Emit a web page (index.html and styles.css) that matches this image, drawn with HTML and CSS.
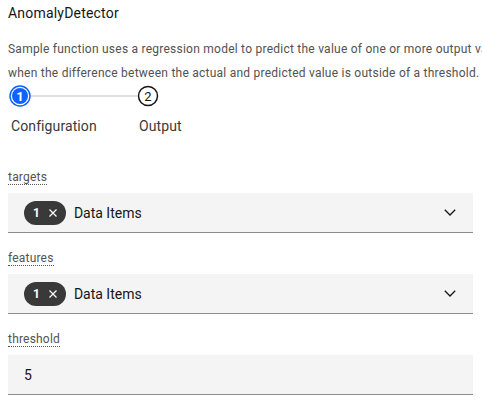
FILE: index.html
```html
<!DOCTYPE html>
<html>
<head>
<meta charset="utf-8">
<link rel="stylesheet" href="styles.css">
</head>
<body>
<div class="page">
  <div class="title">AnomalyDetector</div>
  <div class="desc">
    <div class="desc-line">Sample function uses a regression model to predict the value of one or more output variables.</div>
    <div class="desc-line">when the difference between the actual and predicted value is outside of a threshold.</div>
  </div>
  <div class="steps">
    <div class="step">
      <div class="step-top">
        <svg class="step-icon" width="22" height="22" viewBox="0 0 22 22">
          <circle cx="11" cy="11" r="10" fill="none" stroke="#0f62fe" stroke-width="1.5"/>
          <circle cx="11" cy="11" r="8" fill="#0f62fe"/>
          <text x="11" y="15.6" text-anchor="middle" class="num num-cur">1</text>
        </svg>
        <div class="step-line"></div>
      </div>
      <div class="step-label">Configuration</div>
    </div>
    <div class="step">
      <div class="step-top">
        <svg class="step-icon" width="22" height="22" viewBox="0 0 22 22">
          <circle cx="11" cy="11" r="9.5" fill="#fff" stroke="#161616" stroke-width="1.5"/>
          <text x="11" y="15.6" text-anchor="middle" class="num">2</text>
        </svg>
      </div>
      <div class="step-label">Output</div>
    </div>
  </div>

  <div class="field-group">
    <div class="label"><span>targets</span></div>
    <div class="field">
      <span class="tag"><span class="tag-num">1</span><svg class="tag-x" width="10" height="10" viewBox="0 0 10 10"><path d="M1.5 1.5 L8.5 8.5 M8.5 1.5 L1.5 8.5" stroke="#fff" stroke-width="1.2" fill="none"/></svg></span>
      <span class="field-text">Data Items</span>
      <svg class="chev" width="12" height="7" viewBox="0 0 12 7"><path d="M0.8 0.8 L6 6 L11.2 0.8" stroke="#161616" stroke-width="1.3" fill="none"/></svg>
    </div>
  </div>

  <div class="field-group">
    <div class="label"><span>features</span></div>
    <div class="field">
      <span class="tag"><span class="tag-num">1</span><svg class="tag-x" width="10" height="10" viewBox="0 0 10 10"><path d="M1.5 1.5 L8.5 8.5 M8.5 1.5 L1.5 8.5" stroke="#fff" stroke-width="1.2" fill="none"/></svg></span>
      <span class="field-text">Data Items</span>
      <svg class="chev" width="12" height="7" viewBox="0 0 12 7"><path d="M0.8 0.8 L6 6 L11.2 0.8" stroke="#161616" stroke-width="1.3" fill="none"/></svg>
    </div>
  </div>

  <div class="field-group">
    <div class="label"><span>threshold</span></div>
    <div class="field input">
      <span class="field-text">5</span>
    </div>
  </div>
</div>
</body>
</html>
```
FILE: styles.css
```css
html, body {
  margin: 0;
  padding: 0;
  overflow: hidden;
  background: #fff;
}
body {
  font-family: Roboto, "Liberation Sans", sans-serif;
  color: #161616;
}
.page {
  padding: 3px 9px 0 8px;
  width: 465px;
}
.title {
  font-size: 14px;
  line-height: 20px;
  letter-spacing: 0.2px;
  color: #161616;
}
.desc {
  margin-top: 14px;
  font-size: 12px;
  line-height: 24px;
  letter-spacing: 0.24px;
  color: #525252;
  white-space: nowrap;
}
.steps {
  display: flex;
  margin-top: 0;
  padding-left: 1px;
}
.step {
  width: 128px;
  display: flex;
  flex-direction: column;
}
.step-top {
  display: flex;
  align-items: center;
  height: 22px;
}
.step-icon {
  display: block;
  flex: none;
}
.step-line {
  flex: 1;
  height: 2px;
  background: #e0e0e0;
}
.num {
  font-family: Roboto, sans-serif;
  font-size: 13px;
  fill: #161616;
}
.num-cur {
  fill: #fff;
  font-weight: 700;
}
.step-label {
  margin-top: 10px;
  margin-left: 2px;
  font-size: 14px;
  line-height: 18px;
  letter-spacing: 0.1px;
  color: #393939;
}
.field-group {
  margin-top: 34px;
}
.field-group + .field-group {
  margin-top: 17px;
}
.label {
  font-size: 12px;
  line-height: 16px;
  letter-spacing: 0.2px;
  color: #525252;
  margin-bottom: 8px;
}
.label span {
  border-bottom: 1px dotted #525252;
}
.field {
  height: 39px;
  background: #f4f4f4;
  border-bottom: 1px solid #8d8d8d;
  display: flex;
  align-items: center;
  padding: 0 16px;
}
.tag {
  display: inline-flex;
  align-items: center;
  height: 24px;
  border-radius: 12px;
  background: #393939;
  color: #fff;
  padding: 0 8px 0 9px;
  margin-right: 8px;
  font-size: 12px;
  font-weight: 700;
}
.tag-num {
  margin-right: 8px;
}
.tag-x {
  display: block;
}
.field-text {
  font-size: 14px;
  color: #161616;
  flex: 1;
}
.chev {
  display: block;
  margin-right: 1px;
}
```
